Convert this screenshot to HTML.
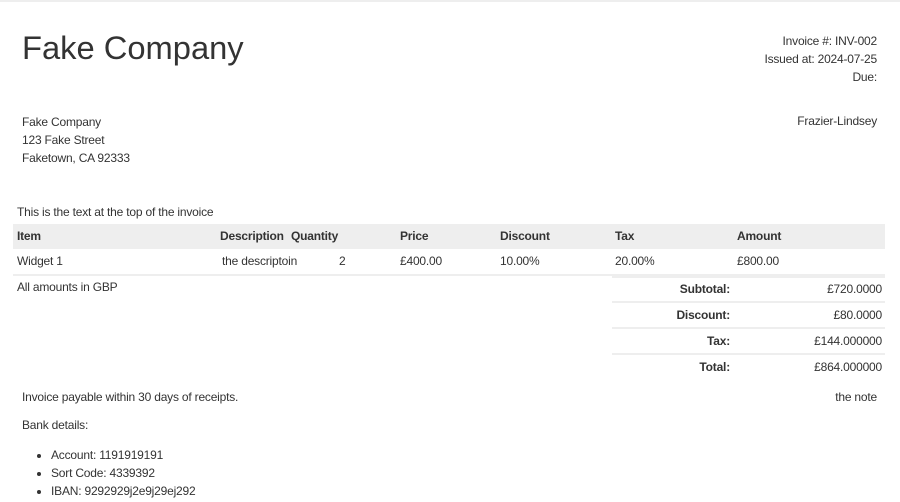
<!DOCTYPE html>
<html><head><style>
body{margin:0;width:900px;height:502px;background:#fff;font-family:"Liberation Sans",sans-serif;font-size:12px;letter-spacing:-0.2px;color:#333;position:relative;overflow:hidden}
.a{position:absolute;white-space:nowrap}
.b{font-weight:bold}
.r{text-align:right}
</style></head><body>
<div class="a" style="left:0;top:0;width:900px;height:2px;background:#eee"></div>
<div class="a" style="left:22px;top:29px;font-size:32.7px;letter-spacing:0">Fake Company</div>
<div class="a r" style="right:23px;top:32px;line-height:18px">Invoice #: INV-002<br>Issued at: 2024-07-25<br>Due:</div>
<div class="a" style="left:22px;top:113px;line-height:18px">Fake Company<br>123 Fake Street<br>Faketown, CA 92333</div>
<div class="a r" style="right:23px;top:114px">Frazier-Lindsey</div>
<div class="a" style="left:17px;top:205px">This is the text at the top of the invoice</div>
<div class="a" style="left:13px;top:224px;width:872px;height:25px;background:#eee"></div>
<div class="a b" style="left:17px;top:229px">Item</div>
<div class="a b" style="left:220px;top:229px">Description</div>
<div class="a b" style="left:291px;top:229px">Quantity</div>
<div class="a b" style="left:400px;top:229px">Price</div>
<div class="a b" style="left:500px;top:229px">Discount</div>
<div class="a b" style="left:615px;top:229px">Tax</div>
<div class="a b" style="left:737px;top:229px">Amount</div>
<div class="a" style="left:17px;top:254px">Widget 1</div>
<div class="a" style="left:222px;top:254px">the descriptoin</div>
<div class="a" style="left:339px;top:254px">2</div>
<div class="a" style="left:400px;top:254px">£400.00</div>
<div class="a" style="left:500px;top:254px">10.00%</div>
<div class="a" style="left:615px;top:254px">20.00%</div>
<div class="a" style="left:737px;top:254px">£800.00</div>
<div class="a" style="left:13px;top:274px;width:872px;height:2px;background:#eee"></div>
<div class="a" style="left:17px;top:280px">All amounts in GBP</div>
<div class="a" style="left:612px;top:276px;width:273px;height:2px;background:#eee"></div>
<div class="a" style="left:612px;top:301px;width:273px;height:2px;background:#eee"></div>
<div class="a" style="left:612px;top:327px;width:273px;height:2px;background:#eee"></div>
<div class="a" style="left:612px;top:353px;width:273px;height:2px;background:#eee"></div>
<div class="a b r" style="right:170px;top:282px">Subtotal:</div><div class="a r" style="right:18px;top:282px">£720.0000</div>
<div class="a b r" style="right:170px;top:308px">Discount:</div><div class="a r" style="right:18px;top:308px">£80.0000</div>
<div class="a b r" style="right:170px;top:334px">Tax:</div><div class="a r" style="right:18px;top:334px">£144.000000</div>
<div class="a b r" style="right:170px;top:360px">Total:</div><div class="a r" style="right:18px;top:360px">£864.000000</div>
<div class="a" style="left:22px;top:390px">Invoice payable within 30 days of receipts.</div>
<div class="a r" style="right:23px;top:390px">the note</div>
<div class="a" style="left:22px;top:418px">Bank details:</div>
<ul class="a" style="left:0;top:446px;margin:0;padding-left:51px;line-height:18px"><li>Account: 1191919191</li><li>Sort Code: 4339392</li><li>IBAN: 9292929j2e9j29ej292</li></ul>
</body></html>
